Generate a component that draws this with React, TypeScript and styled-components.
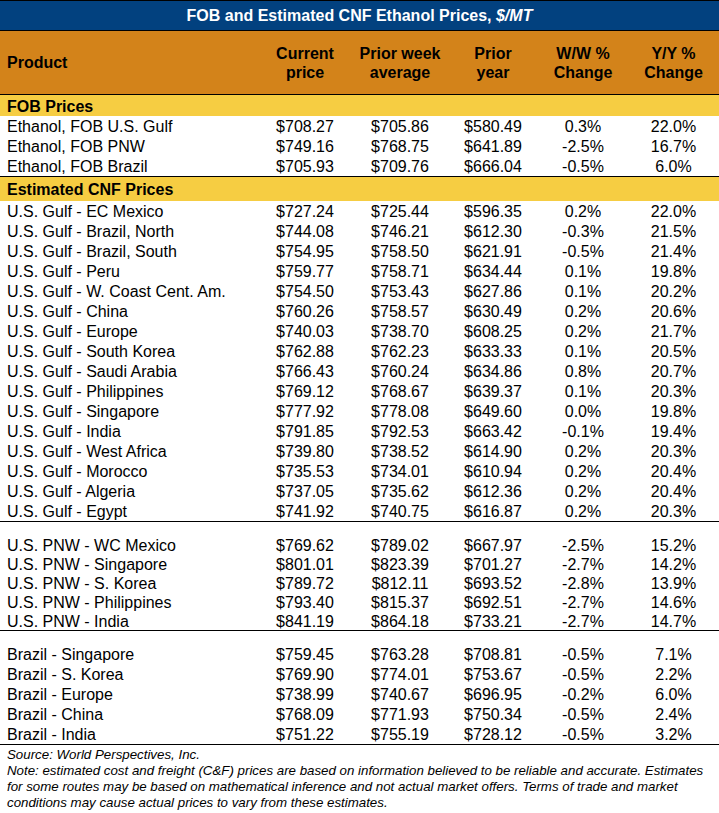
import { FC } from 'react'
import styled, { createGlobalStyle } from 'styled-components'

type Line = [string, string, string, string, string, string]

const fobRows: Line[] = [
  ['Ethanol, FOB U.S. Gulf', '$708.27', '$705.86', '$580.49', '0.3%', '22.0%'],
  ['Ethanol, FOB PNW', '$749.16', '$768.75', '$641.89', '-2.5%', '16.7%'],
  ['Ethanol, FOB Brazil', '$705.93', '$709.76', '$666.04', '-0.5%', '6.0%'],
]

const gulfRows: Line[] = [
  ['U.S. Gulf - EC Mexico', '$727.24', '$725.44', '$596.35', '0.2%', '22.0%'],
  ['U.S. Gulf - Brazil, North', '$744.08', '$746.21', '$612.30', '-0.3%', '21.5%'],
  ['U.S. Gulf - Brazil, South', '$754.95', '$758.50', '$621.91', '-0.5%', '21.4%'],
  ['U.S. Gulf - Peru', '$759.77', '$758.71', '$634.44', '0.1%', '19.8%'],
  ['U.S. Gulf - W. Coast Cent. Am.', '$754.50', '$753.43', '$627.86', '0.1%', '20.2%'],
  ['U.S. Gulf - China', '$760.26', '$758.57', '$630.49', '0.2%', '20.6%'],
  ['U.S. Gulf - Europe', '$740.03', '$738.70', '$608.25', '0.2%', '21.7%'],
  ['U.S. Gulf - South Korea', '$762.88', '$762.23', '$633.33', '0.1%', '20.5%'],
  ['U.S. Gulf - Saudi Arabia', '$766.43', '$760.24', '$634.86', '0.8%', '20.7%'],
  ['U.S. Gulf - Philippines', '$769.12', '$768.67', '$639.37', '0.1%', '20.3%'],
  ['U.S. Gulf - Singapore', '$777.92', '$778.08', '$649.60', '0.0%', '19.8%'],
  ['U.S. Gulf - India', '$791.85', '$792.53', '$663.42', '-0.1%', '19.4%'],
  ['U.S. Gulf - West Africa', '$739.80', '$738.52', '$614.90', '0.2%', '20.3%'],
  ['U.S. Gulf - Morocco', '$735.53', '$734.01', '$610.94', '0.2%', '20.4%'],
  ['U.S. Gulf - Algeria', '$737.05', '$735.62', '$612.36', '0.2%', '20.4%'],
  ['U.S. Gulf - Egypt', '$741.92', '$740.75', '$616.87', '0.2%', '20.3%'],
]

const pnwRows: Line[] = [
  ['U.S. PNW - WC Mexico', '$769.62', '$789.02', '$667.97', '-2.5%', '15.2%'],
  ['U.S. PNW - Singapore', '$801.01', '$823.39', '$701.27', '-2.7%', '14.2%'],
  ['U.S. PNW - S. Korea', '$789.72', '$812.11', '$693.52', '-2.8%', '13.9%'],
  ['U.S. PNW - Philippines', '$793.40', '$815.37', '$692.51', '-2.7%', '14.6%'],
  ['U.S. PNW - India', '$841.19', '$864.18', '$733.21', '-2.7%', '14.7%'],
]

const brazilRows: Line[] = [
  ['Brazil - Singapore', '$759.45', '$763.28', '$708.81', '-0.5%', '7.1%'],
  ['Brazil - S. Korea', '$769.90', '$774.01', '$753.67', '-0.5%', '2.2%'],
  ['Brazil - Europe', '$738.99', '$740.67', '$696.95', '-0.2%', '6.0%'],
  ['Brazil - China', '$768.09', '$771.93', '$750.34', '-0.5%', '2.4%'],
  ['Brazil - India', '$751.22', '$755.19', '$728.12', '-0.5%', '3.2%'],
]

const headers = [
  ['Current', 'price'],
  ['Prior week', 'average'],
  ['Prior', 'year'],
  ['W/W %', 'Change'],
  ['Y/Y %', 'Change'],
]

const noteLines = [
  'Note: estimated cost and freight (C&F) prices are based on information believed to be reliable and accurate. Estimates',
  'for some routes may be based on mathematical inference and not actual market offers. Terms of trade and market',
  'conditions may cause actual prices to vary from these estimates.',
]

const RowGroup: FC<{ rows: Line[]; dense?: boolean }> = ({ rows, dense }) => (
  <Group>
    {rows.map((r) => (
      <Row key={r[0]} $dense={dense}>
        {r.map((v, i) => (
          <Cell key={i} $first={i === 0}>{v}</Cell>
        ))}
      </Row>
    ))}
  </Group>
)

export default function App() {
  return (
    <>
      <GlobalStyle />
      <Sheet>
        <TitleBar>
          FOB and Estimated CNF Ethanol Prices, <em>$/MT</em>
        </TitleBar>
        <HeaderRow>
          <HeadCell $first>Product</HeadCell>
          {headers.map(([a, b]) => (
            <HeadCell key={a + b}>
              {a}
              <br />
              {b}
            </HeadCell>
          ))}
        </HeaderRow>
        <Band $h={21}>FOB Prices</Band>
        <RowGroup rows={fobRows} />
        <Band $h={24}>Estimated CNF Prices</Band>
        <RowGroup rows={gulfRows} />
        <Spacer />
        <RowGroup rows={pnwRows} dense />
        <Spacer />
        <RowGroup rows={brazilRows} />
        <Footer>
          <p>Source: World Perspectives, Inc.</p>
          {noteLines.map((l) => (
            <p key={l}>{l}</p>
          ))}
        </Footer>
      </Sheet>
    </>
  )
}

const GlobalStyle = createGlobalStyle`
  body {
    margin: 0;
    background: #fff;
    font-family: "Liberation Sans", Arial, sans-serif;
    color: #000;
  }
`

const cols = '258px 94px 96px 90px 90px 91px'

const Sheet = styled.div`
  width: 719px;
  border-top: 1px solid #000;
`

const TitleBar = styled.div`
  height: 29px;
  background: #02417f;
  color: #fff;
  font-size: 16px;
  font-weight: bold;
  text-align: center;
  line-height: 30px;
  border-bottom: 1px solid #000;

  em {
    font-style: italic;
  }
`

const HeaderRow = styled.div`
  display: grid;
  grid-template-columns: ${cols};
  height: 63px;
  background: #d3831a;
  border-bottom: 1px solid #000;
`

const HeadCell = styled.div<{ $first?: boolean }>`
  display: flex;
  align-items: center;
  justify-content: ${(p) => (p.$first ? 'flex-start' : 'center')};
  padding-left: ${(p) => (p.$first ? '7px' : '0')};
  text-align: center;
  font-size: 16px;
  font-weight: bold;
  line-height: 19px;
`

const Band = styled.div<{ $h: number }>`
  height: ${(p) => p.$h}px;
  line-height: ${(p) => p.$h + 2}px;
  background: #f6cd42;
  padding-left: 7px;
  font-size: 16px;
  font-weight: bold;
`

const Group = styled.div`
  border-bottom: 1px solid #000;
`

const Row = styled.div<{ $dense?: boolean }>`
  display: grid;
  grid-template-columns: ${cols};
  height: ${(p) => (p.$dense ? 19 : 20)}px;
  line-height: ${(p) => (p.$dense ? 19 : 20)}px;
  font-size: 16px;
`

const Cell = styled.div<{ $first?: boolean }>`
  padding-top: 1px;
  text-align: ${(p) => (p.$first ? 'left' : 'center')};
  padding-left: ${(p) => (p.$first ? '7px' : '0')};
  white-space: nowrap;
`

const Spacer = styled.div`
  height: 13px;
`

const Footer = styled.div`
  padding: 2px 4px 0 7px;
  font-size: 13.3px;
  font-style: italic;
  line-height: 16px;

  p {
    margin: 0;
    white-space: nowrap;
  }
`
